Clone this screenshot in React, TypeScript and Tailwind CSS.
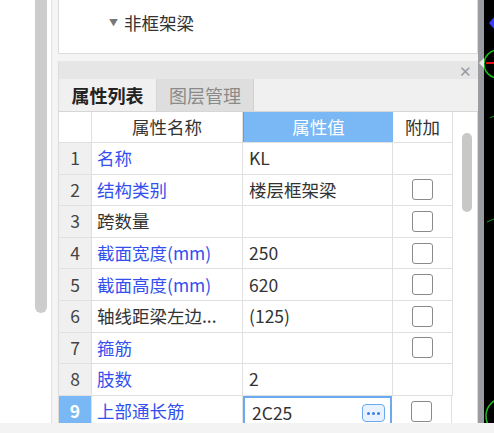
type Row = {
  no: number
  name: string
  value: string
  link: boolean
  check: boolean
}

const rows: Row[] = [
  { no: 1, name: '名称', value: 'KL', link: true, check: false },
  { no: 2, name: '结构类别', value: '楼层框架梁', link: true, check: true },
  { no: 3, name: '跨数量', value: '', link: false, check: true },
  { no: 4, name: '截面宽度(mm)', value: '250', link: true, check: true },
  { no: 5, name: '截面高度(mm)', value: '620', link: true, check: true },
  { no: 6, name: '轴线距梁左边...', value: '(125)', link: false, check: true },
  { no: 7, name: '箍筋', value: '', link: true, check: true },
  { no: 8, name: '肢数', value: '2', link: true, check: false },
  { no: 9, name: '上部通长筋', value: '2C25', link: true, check: true },
]

function Checkbox() {
  return <div className="h-[21px] w-[21px] rounded-[3px] border-[1.5px] border-[#8a8a8a] bg-white" />
}

function CadStrip() {
  return (
    <svg width="10" height="423" viewBox="0 0 10 423" className="block">
      <rect width="10" height="423" fill="#000" />
      <polygon points="10,17 5,23 10,29" fill="#3a3aff" />
      <circle cx="14" cy="64" r="14" fill="none" stroke="#1fbf1f" strokeWidth="1.5" />
      <line x1="2" y1="63" x2="10" y2="63" stroke="#e01010" strokeWidth="2" />
      <line x1="6" y1="118" x2="10" y2="116" stroke="#1a9a1a" strokeWidth="1" />
      <line x1="3" y1="222" x2="10" y2="219" stroke="#1a9a1a" strokeWidth="1" />
      <circle cx="20" cy="416" r="18" fill="none" stroke="#1fbf1f" strokeWidth="1.5" />
    </svg>
  )
}

export default function App() {
  return (
    <div className="flex h-[433px] w-[494px] flex-col overflow-hidden bg-white font-['Noto_Sans_CJK_SC','Noto_Sans',sans-serif] text-[17.5px] text-[#333]">
      <div className="flex h-[423px] shrink-0">
        {/* left scroll strip */}
        <div className="w-[52px] shrink-0 border-r border-[#e2e2e2] bg-white">
          <div className="ml-[35px] h-[313px] w-[12px] rounded-b-full bg-[#cdcdcd]" />
        </div>

        {/* panels */}
        <div className="flex w-[426px] shrink-0 flex-col bg-[#f4f4f4] pl-[6px]">
          {/* tree panel */}
          <div className="flex h-[54px] shrink-0 items-center border border-t-0 border-[#dcdcdc] bg-white pb-[7px] pl-[50px]">
            <span className="mr-[6px] text-[9px] text-[#777]">▼</span>
            <span className="leading-none">非框架梁</span>
          </div>

          {/* property panel */}
          <div className="mt-[7px] flex min-h-0 flex-1 flex-col overflow-hidden border-l border-[#dcdcdc] bg-white">
            <div className="flex h-[18px] shrink-0 items-center justify-end bg-[#e6e6e6] pr-[6px]">
              <span className="text-[15px] leading-none text-[#9a9a9a]">✕</span>
            </div>
            <div className="flex h-[33px] shrink-0 border-b border-[#d6d6d6] bg-[#f0f0f0] text-[18px]">
              <div className="flex w-[98px] items-center justify-center border-r border-[#d6d6d6] font-bold text-[#222]">
                属性列表
              </div>
              <div className="flex w-[97px] items-center justify-center border-r border-[#d0d0d0] bg-[#dedede] text-[#8a8a8a]">
                图层管理
              </div>
            </div>

            <div className="flex min-h-0 flex-1 overflow-hidden">
              <div className="w-[394px] shrink-0">
                {/* header */}
                <div className="flex h-[31px] border-b border-[#e0e0e0]">
                  <div className="w-[33px] border-r border-[#e0e0e0]" />
                  <div className="flex w-[151px] items-center justify-center border-r border-[#e0e0e0]">属性名称</div>
                  <div className="flex w-[150px] items-center justify-center border-l border-[#5d9fe8] bg-[#7ab8f5] text-white">
                    属性值
                  </div>
                  <div className="flex w-[60px] items-center justify-center border-r border-[#e0e0e0]">附加</div>
                </div>

                {rows.map((r) => {
                  const active = r.no === 9
                  return (
                    <div key={r.no} className="flex h-[31.6px] border-b border-[#e0e0e0]">
                      <div
                        className={
                          active
                            ? 'flex w-[33px] items-center justify-center border-r border-[#e0e0e0] bg-[#7ab8f5] font-bold text-white'
                            : 'flex w-[33px] items-center justify-center border-r border-[#e0e0e0] bg-[#f0f0f0] text-[#444]'
                        }
                      >
                        {r.no}
                      </div>
                      <div
                        className={
                          r.link
                            ? 'flex w-[151px] items-center border-r border-[#e0e0e0] pl-[5px] whitespace-nowrap text-[#3350ee]'
                            : 'flex w-[151px] items-center border-r border-[#e0e0e0] pl-[5px] whitespace-nowrap'
                        }
                      >
                        {r.name}
                      </div>
                      {active ? (
                        <div className="flex w-[149px] items-center justify-between border-2 border-[#6aaaf0] pl-[7px] pr-[5px] pt-[4px]">
                          <span>{r.value}</span>
                          <span className="flex h-[18px] w-[23px] items-center justify-center gap-[2px] rounded-[4px] border border-[#6aaaf0] bg-[#e8f1fc]">
                            <span className="h-[3px] w-[3px] rounded-full bg-[#3a7fe0]" />
                            <span className="h-[3px] w-[3px] rounded-full bg-[#3a7fe0]" />
                            <span className="h-[3px] w-[3px] rounded-full bg-[#3a7fe0]" />
                          </span>
                        </div>
                      ) : (
                        <div className="flex w-[150px] items-center border-r border-[#e0e0e0] pl-[6px]">{r.value}</div>
                      )}
                      <div className="flex w-[60px] items-center justify-center border-r border-[#e0e0e0]">
                        {r.check && <Checkbox />}
                      </div>
                    </div>
                  )
                })}
              </div>

              {/* vertical scrollbar */}
              <div className="flex-1 border-r border-[#dcdcdc] pt-[21px]">
                <div className="ml-[9px] h-[79px] w-[10px] rounded-full bg-[#c8c8c8]" />
              </div>
            </div>
          </div>
        </div>

        {/* splitter */}
        <div className="relative w-[6px] shrink-0 bg-[#9a9ea3]">
          <div className="absolute left-[1px] top-[58px] h-0 w-0 border-y-[5px] border-r-[5px] border-y-transparent border-r-[#e8e8e8]" />
        </div>

        <CadStrip />
      </div>
      <div className="h-[10px] shrink-0 bg-[#f3f3f3]" />
    </div>
  )
}
